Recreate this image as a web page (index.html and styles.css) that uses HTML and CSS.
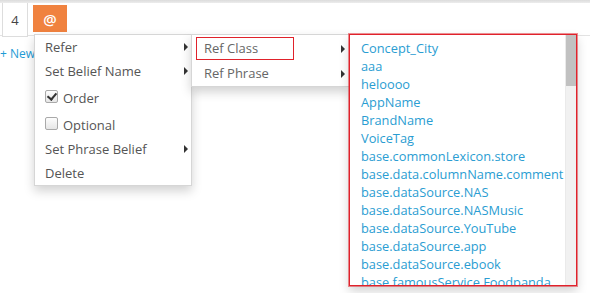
FILE: index.html
```html
<!DOCTYPE html>
<html>
<head>
<meta charset="utf-8">
<link rel="stylesheet" href="styles.css">
</head>
<body>
<div class="topbar"></div>
<div class="row">
  <div class="cell">4</div>
  <div class="at-btn">@</div>
</div>
<div class="newlink">+ New</div>

<div class="menu menu1">
  <div class="item sub">Refer</div>
  <div class="item sub">Set Belief Name</div>
  <div class="item check"><span class="box checked"></span>Order</div>
  <div class="item check"><span class="box"></span>Optional</div>
  <div class="item sub">Set Phrase Belief</div>
  <div class="item">Delete</div>
</div>

<div class="menu menu2">
  <div class="item2 sub"><span class="hl">Ref Class</span></div>
  <div class="item2 sub"><span class="plain">Ref Phrase</span></div>
</div>

<div class="menu3">
  <div class="list">
    <div class="li">Concept_City</div>
    <div class="li">aaa</div>
    <div class="li">heloooo</div>
    <div class="li">AppName</div>
    <div class="li">BrandName</div>
    <div class="li">VoiceTag</div>
    <div class="li">base.commonLexicon.store</div>
    <div class="li">base.data.columnName.comment</div>
    <div class="li">base.dataSource.NAS</div>
    <div class="li">base.dataSource.NASMusic</div>
    <div class="li">base.dataSource.YouTube</div>
    <div class="li">base.dataSource.app</div>
    <div class="li">base.dataSource.ebook</div>
    <div class="li">base.famousService.Foodpanda</div>
  </div>
  <div class="scroll"><div class="thumb"></div></div>
</div>
</body>
</html>
```
FILE: styles.css
```css
html, body {
  margin: 0;
  padding: 0;
  background: #fff;
  font-family: "Open Sans", "Liberation Sans", sans-serif;
  font-size: 13px;
  color: #555;
  position: relative;
  width: 590px;
  height: 293px;
  overflow: hidden;
}
.topbar {
  height: 3px;
  background: linear-gradient(#dcdcdc, #ececec);
}
.row {
  display: flex;
  align-items: flex-start;
  padding-left: 2px;
  height: 32px;
  border-bottom: 1px solid #e3e3e3;
}
.cell {
  width: 24px;
  height: 33px;
  border: 1px solid #ddd;
  border-top: none;
  display: flex;
  align-items: center;
  justify-content: center;
  color: #444;
  font-size: 13px;
  background: #fff;
}
.at-btn {
  margin-left: 5px;
  margin-top: 2px;
  width: 34px;
  height: 27px;
  background: #f0823f;
  color: #fff;
  font-size: 15px;
  font-weight: 600;
  display: flex;
  align-items: center;
  justify-content: center;
}
.newlink {
  margin-top: 10px;
  color: #1f9bd5;
  font-size: 12px;
  line-height: 16px;
}
.menu {
  position: absolute;
  background: #fff;
  border: 1px solid #d6d6d6;
  box-shadow: 0 5px 10px rgba(0,0,0,0.18);
}
.menu1 {
  left: 34px;
  top: 34px;
  width: 156px;
}
.item {
  position: relative;
  height: 24px;
  line-height: 24px;
  padding-left: 10px;
  white-space: nowrap;
}
.item.check {
  box-sizing: border-box;
  height: 27px;
  padding-top: 3px;
  line-height: 24px;
  display: flex;
  align-items: center;
}
.sub::after {
  content: "";
  position: absolute;
  right: 3px;
  top: 50%;
  margin-top: -4px;
  border-left: 4px solid #333;
  border-top: 4px solid transparent;
  border-bottom: 4px solid transparent;
}
.box {
  width: 11px;
  height: 11px;
  border: 1px solid #a9a9a9;
  border-radius: 2px;
  background: linear-gradient(#fdfdfd, #e6e6e6);
  margin-right: 5px;
  position: relative;
  top: -2px;
}
.box.checked::after {
  content: "";
  position: absolute;
  left: 3px;
  top: 0px;
  width: 4px;
  height: 7px;
  border-right: 2px solid #333;
  border-bottom: 2px solid #333;
  transform: rotate(40deg);
}
.menu2 {
  left: 191px;
  top: 34px;
  width: 157px;
  padding-top: 1px;
  color: #666;
}
.item2 {
  position: relative;
  height: 25px;
  display: flex;
  align-items: center;
  padding-left: 4px;
}
.item2.sub::after {
  right: 4px;
}
.hl, .plain {
  display: inline-block;
  width: 89px;
  height: 21px;
  line-height: 21px;
  padding-left: 7px;
  border: 1px solid transparent;
}
.hl {
  border-color: #e0222b;
}
.menu3 {
  position: absolute;
  left: 349px;
  top: 34px;
  width: 226px;
  height: 250px;
  border: 1px solid #e0222b;
  outline: 1px solid rgba(224,34,43,0.5);
  background: #fff;
  display: flex;
  box-shadow: 0 5px 10px rgba(0,0,0,0.18);
}
.list {
  flex: 1;
  overflow: hidden;
  padding: 4px 0 0 11px;
  font-size: 12.8px;
}
.li {
  height: 18px;
  line-height: 18px;
  color: #2a9dd2;
  white-space: nowrap;
}
.scroll {
  width: 10px;
  background: #f1f1f1;
  border-left: 1px solid #eaeaea;
}
.thumb {
  height: 51px;
  background: #c1c1c1;
}
```
